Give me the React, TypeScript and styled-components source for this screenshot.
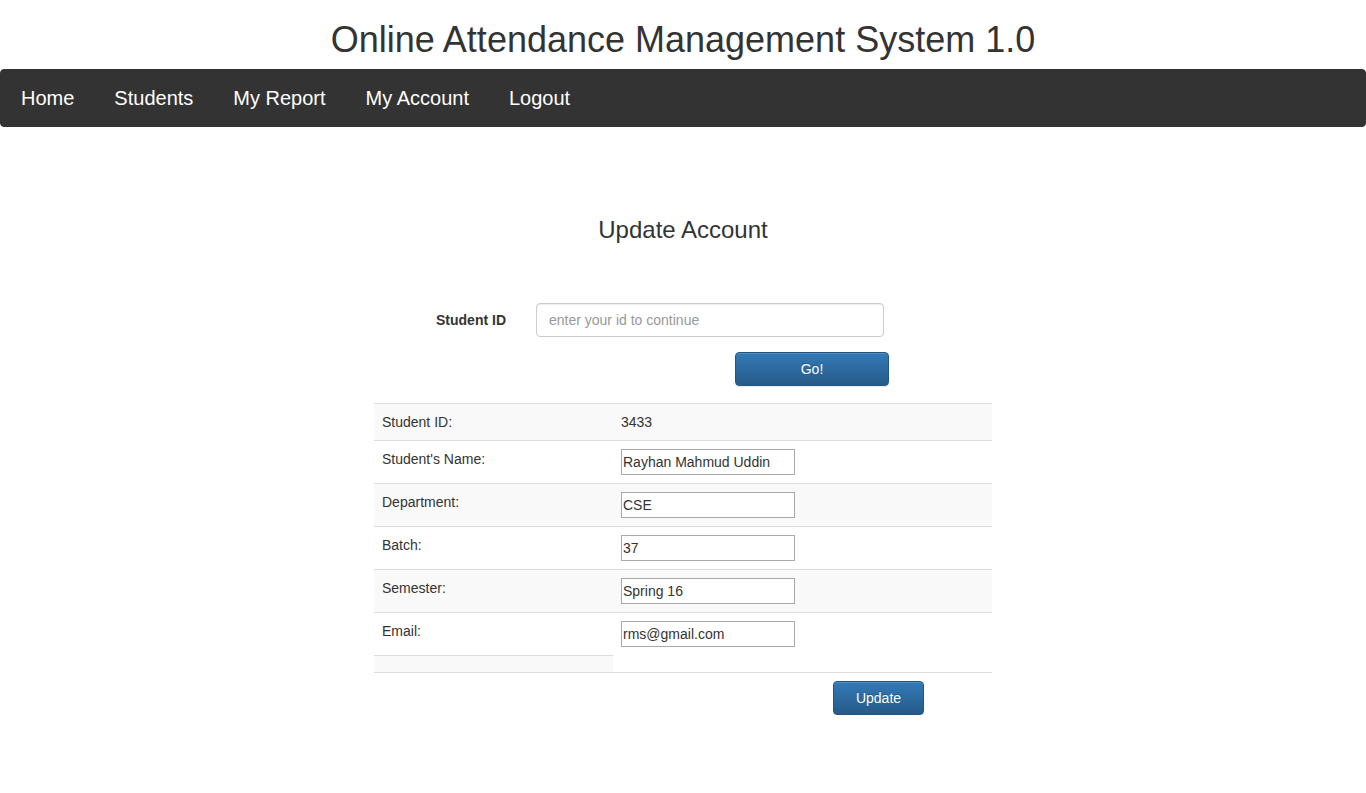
import React from "react";
import styled, { createGlobalStyle } from "styled-components";

const Global = createGlobalStyle`
  html, body { margin: 0; padding: 0; background: #fff; }
  body {
    font-family: "Liberation Sans", Arial, sans-serif;
    font-size: 14px;
    line-height: 1.42857;
    color: #333;
  }
  * { box-sizing: border-box; }
`;

const Title = styled.h1`
  margin: 20px 0 10px;
  font-size: 36px;
  font-weight: 500;
  line-height: 39px;
  text-align: center;
  color: #333;
`;

const Navbar = styled.nav`
  display: flex;
  background: #333;
  border: 1px solid #333;
  border-radius: 4px;
`;

const NavLink = styled.a`
  display: block;
  padding: 18px 20px;
  font-size: 20px;
  line-height: 20px;
  color: #fff;
  text-decoration: none;
`;

const Main = styled.main`
  width: 618px;
  margin: 0 auto;
  padding-top: 90px;
`;

const Heading = styled.h3`
  margin: 0 0 60px;
  font-size: 24px;
  font-weight: 500;
  line-height: 26px;
  text-align: center;
  color: #333;
`;

const FormRow = styled.div`
  display: flex;
  align-items: center;
  gap: 30px;
`;

const Label = styled.label`
  width: 132px;
  padding-top: 2px;
  text-align: right;
  font-weight: bold;
`;

const IdInput = styled.input`
  width: 348px;
  height: 34px;
  padding: 6px 12px;
  font-family: inherit;
  font-size: 14px;
  color: #555;
  border: 1px solid #ccc;
  border-radius: 4px;
  box-shadow: inset 0 1px 1px rgba(0, 0, 0, 0.075);
  &::placeholder { color: #999; }
`;

const ButtonRow = styled.div<{ $offset: number; $top: number }>`
  display: flex;
  padding-left: ${(p) => p.$offset}px;
  margin-top: ${(p) => p.$top}px;
`;

const PrimaryButton = styled.button<{ $width: number }>`
  width: ${(p) => p.$width}px;
  height: 34px;
  padding: 6px 12px;
  font-family: inherit;
  font-size: 14px;
  color: #fff;
  background: linear-gradient(to bottom, #337ab7 0%, #265a88 100%);
  border: 1px solid #245580;
  border-radius: 4px;
  text-shadow: 0 -1px 0 rgba(0, 0, 0, 0.2);
  box-shadow: inset 0 1px 0 rgba(255, 255, 255, 0.15), 0 1px 1px rgba(0, 0, 0, 0.075);
`;

const Table = styled.table`
  width: 618px;
  margin-top: 17px;
  border-collapse: collapse;
  border-spacing: 0;
  border-bottom: 1px solid #ddd;
  tr:nth-child(odd) > td { background: #f9f9f9; }
`;

const Cell = styled.td<{ $w?: number; $h?: number }>`
  padding: 8px;
  vertical-align: top;
  line-height: 20px;
  border-top: 1px solid #ddd;
  width: ${(p) => (p.$w ? `${p.$w}px` : "auto")};
  height: ${(p) => p.$h ?? 17}px;
`;

const FieldInput = styled.input`
  display: block;
  width: 174px;
  height: 26px;
  padding: 1px;
  font-family: "Liberation Sans", Arial, sans-serif;
  font-size: 14px;
  color: #333;
  border: 1px solid #a9a9a9;
  border-radius: 0;
  background: #fff;
`;

const fields = [
  ["Student's Name:", "Rayhan Mahmud Uddin"],
  ["Department:", "CSE"],
  ["Batch:", "37"],
  ["Semester:", "Spring 16"],
];

export default function App() {
  return (
    <>
      <Global />
      <Title>Online Attendance Management System 1.0</Title>
      <Navbar>
        <NavLink href="#">Home</NavLink>
        <NavLink href="#">Students</NavLink>
        <NavLink href="#">My Report</NavLink>
        <NavLink href="#">My Account</NavLink>
        <NavLink href="#">Logout</NavLink>
      </Navbar>
      <Main>
        <Heading>Update Account</Heading>
        <FormRow>
          <Label>Student ID</Label>
          <IdInput placeholder="enter your id to continue" />
        </FormRow>
        <ButtonRow $offset={361} $top={15}>
          <PrimaryButton $width={154}>Go!</PrimaryButton>
        </ButtonRow>
        <Table>
          <tbody>
            <tr>
              <Cell $w={239}>Student ID:</Cell>
              <Cell>3433</Cell>
            </tr>
            {fields.map(([label, value]) => (
              <tr key={label}>
                <Cell $w={239}>{label}</Cell>
                <Cell>
                  <FieldInput defaultValue={value} />
                </Cell>
              </tr>
            ))}
            <tr>
              <Cell $w={239} $h={43}>Email:</Cell>
              <Cell rowSpan={2}>
                <FieldInput defaultValue="rms@gmail.com" />
              </Cell>
            </tr>
            <tr>
              <Cell $w={239}></Cell>
            </tr>
          </tbody>
        </Table>
        <ButtonRow $offset={459} $top={8}>
          <PrimaryButton $width={91}>Update</PrimaryButton>
        </ButtonRow>
      </Main>
    </>
  );
}
